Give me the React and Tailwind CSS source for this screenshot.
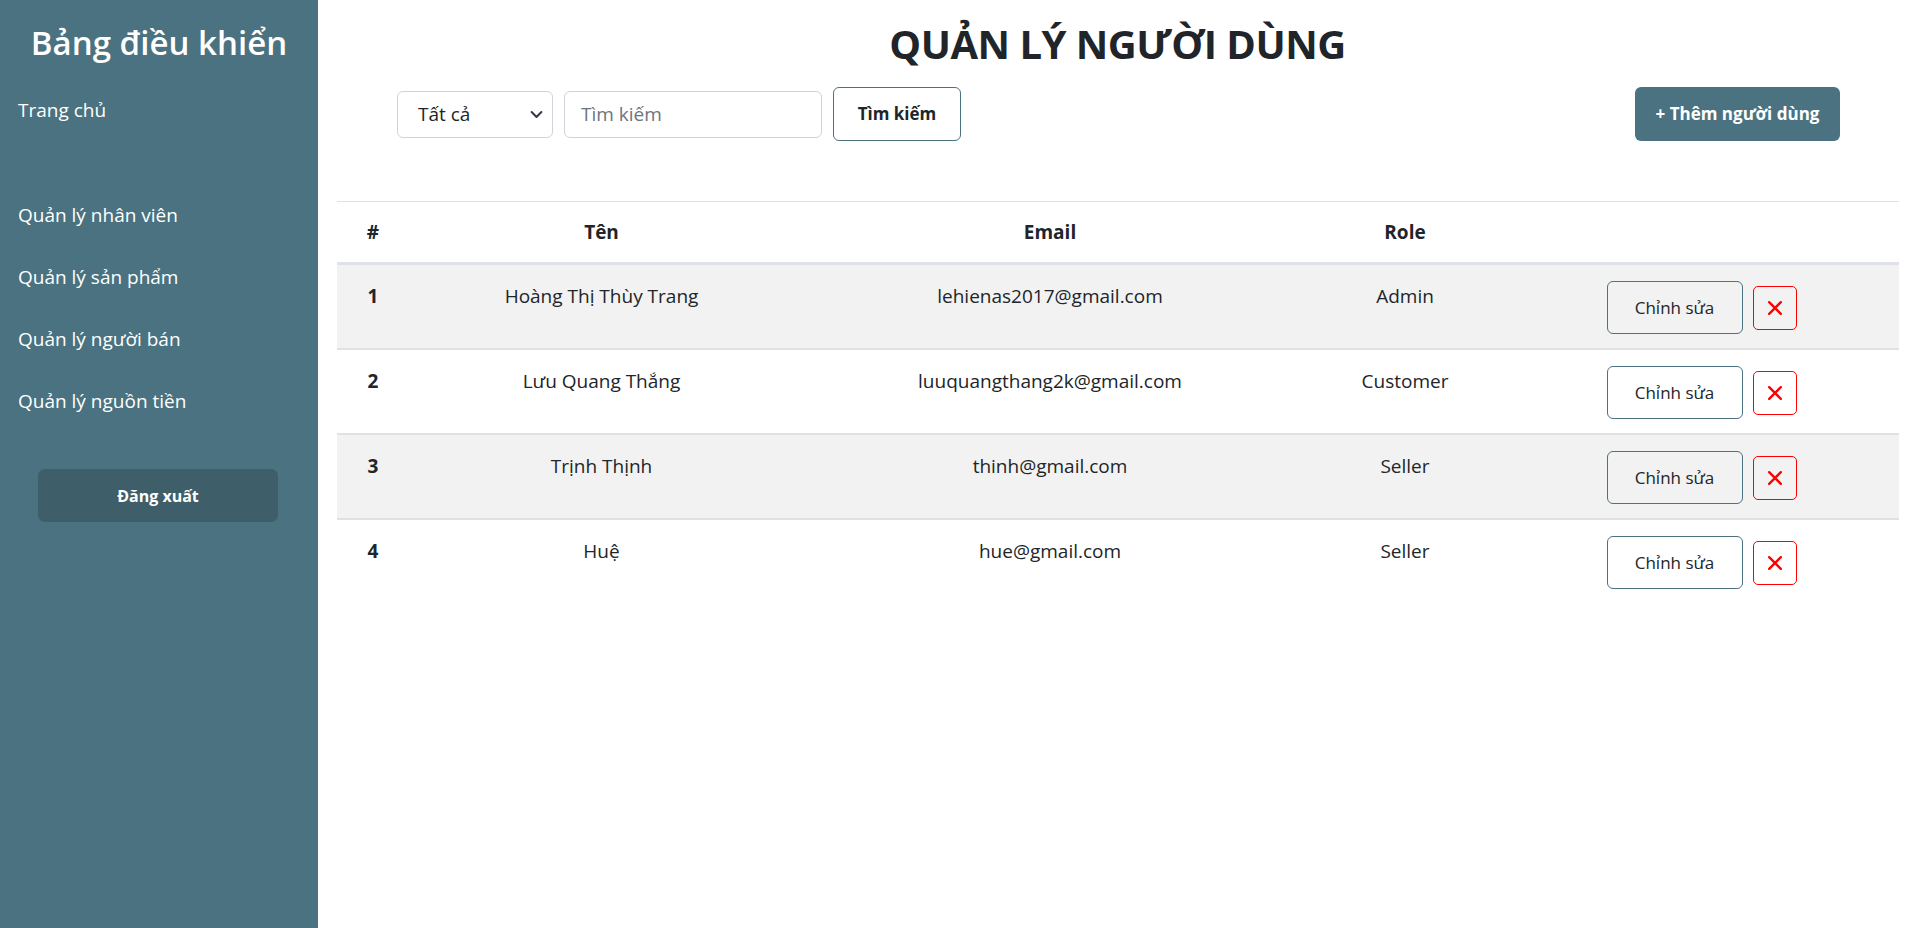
import React, { useState } from 'react';

const menuItems = ['Quản lý nhân viên', 'Quản lý sản phẩm', 'Quản lý người bán', 'Quản lý nguồn tiền'];

const users = [
  { id: 1, name: 'Hoàng Thị Thùy Trang', email: 'lehienas2017@gmail.com', role: 'Admin' },
  { id: 2, name: 'Lưu Quang Thắng', email: 'luuquangthang2k@gmail.com', role: 'Customer' },
  { id: 3, name: 'Trịnh Thịnh', email: 'thinh@gmail.com', role: 'Seller' },
  { id: 4, name: 'Huệ', email: 'hue@gmail.com', role: 'Seller' },
];

const Sidebar = () => (
  <aside className="w-[318px] shrink-0 h-full bg-[#4a7280] text-white pt-[23px]">
    <h2 className="text-center text-[33px] leading-[40px] font-semibold">Bảng điều khiển</h2>
    <ul className="mt-[16px]">
      <li className="h-[62px] flex items-center pl-[18px] text-[19px]">Trang chủ</li>
      <li className="h-[43px]"></li>
      {menuItems.map((item) => (
        <li key={item} className="h-[62px] flex items-center pl-[18px] text-[19px]">
          {item}
        </li>
      ))}
    </ul>
    <button className="mt-[37px] ml-[38px] w-[240px] h-[53px] rounded-[7px] bg-[#3e5e6a] text-white text-[16px] font-bold">
      Đăng xuất
    </button>
  </aside>
);

const App = () => {
  const [filter, setFilter] = useState('all');
  const [keyword, setKeyword] = useState('');

  return (
    <div className="flex h-screen overflow-hidden bg-white font-['Open_Sans',sans-serif] text-[#212529]">
      <Sidebar />

      <main className="flex-1 pt-[20px]">
        {/* Header */}
        <h1 className="text-center text-[40px] leading-[48px] font-bold tracking-[-0.5px]">QUẢN LÝ NGƯỜI DÙNG</h1>

        {/* Toolbar */}
        <div className="mt-[19px] flex items-center justify-between pl-[79px] pr-[77px]">
          <div className="flex items-center gap-[11px]">
            <div className="relative">
              <select
                value={filter}
                onChange={(e) => setFilter(e.target.value)}
                className="appearance-none w-[156px] h-[47px] border border-[#ced4da] rounded-[6px] bg-white pl-[20px] text-[19px] text-[#212529] outline-none"
              >
                <option value="all">Tất cả</option>
                <option value="admin">Admin</option>
                <option value="customer">Customer</option>
                <option value="seller">Seller</option>
              </select>
              <svg className="pointer-events-none absolute right-[10px] top-[17px] w-[13px] h-[13px]" viewBox="0 0 16 16" fill="none" stroke="#343a40" strokeWidth="2.5" strokeLinecap="round" strokeLinejoin="round">
                <path d="M2 5l6 6 6-6" />
              </svg>
            </div>
            <input
              value={keyword}
              onChange={(e) => setKeyword(e.target.value)}
              placeholder="Tìm kiếm"
              className="w-[258px] h-[47px] border border-[#ced4da] rounded-[6px] pl-[16px] text-[19px] placeholder:text-[#6c757d] outline-none"
            />
            <button className="w-[128px] h-[54px] border border-[#4a7280] rounded-[6px] bg-white text-[17px] font-bold">
              Tìm kiếm
            </button>
          </div>
          <button className="w-[205px] h-[54px] rounded-[6px] bg-[#4a7280] text-white text-[17px] font-bold">
            + Thêm người dùng
          </button>
        </div>

        {/* Table */}
        <div className="mt-[60px] ml-[19px] mr-[18px]">
          <table className="w-full table-fixed border-collapse text-[19px]">
            <colgroup>
              <col className="w-[72px]" />
              <col className="w-[385px]" />
              <col className="w-[512px]" />
              <col className="w-[198px]" />
              <col />
            </colgroup>
            <thead>
              <tr className="border-t border-[#dee2e6] border-b-[3px] border-b-[#dee2e6]">
                <th className="py-[15px] leading-[30px] font-bold">#</th>
                <th className="py-[15px] leading-[30px] font-bold">Tên</th>
                <th className="py-[15px] leading-[30px] font-bold">Email</th>
                <th className="py-[15px] leading-[30px] font-bold">Role</th>
                <th className="py-[15px] leading-[30px]"></th>
              </tr>
            </thead>
            <tbody>
              {users.map((u, i) => (
                <tr key={u.id} className={`${i % 2 === 0 ? 'bg-[#f2f2f2]' : 'bg-white'} ${i < users.length - 1 ? 'border-b-2 border-[#dee2e6]' : ''}`}>
                  <td className="align-top text-center pt-[16px] leading-[30px] font-bold">{u.id}</td>
                  <td className="align-top text-center pt-[16px] leading-[30px]">{u.name}</td>
                  <td className="align-top text-center pt-[16px] leading-[30px]">{u.email}</td>
                  <td className="align-top text-center pt-[16px] leading-[30px]">{u.role}</td>
                  <td className="align-top pt-[16px] pb-[14px]">
                    <div className="flex items-center justify-center gap-[10px]">
                      <button className="w-[136px] h-[53px] border border-[#4a7280] rounded-[6px] text-[17px] font-medium text-[#212529]">
                        Chỉnh sửa
                      </button>
                      <button className="w-[44px] h-[44px] border border-[#ff0000] rounded-[5px] flex items-center justify-center" aria-label="Xóa">
                        <svg className="w-[14px] h-[14px]" viewBox="0 0 12 12" fill="none" stroke="#ff0000" strokeWidth="2" strokeLinecap="round">
                          <path d="M1 1l10 10M11 1L1 11" />
                        </svg>
                      </button>
                    </div>
                  </td>
                </tr>
              ))}
            </tbody>
          </table>
        </div>
      </main>
    </div>
  );
};

export default App;
